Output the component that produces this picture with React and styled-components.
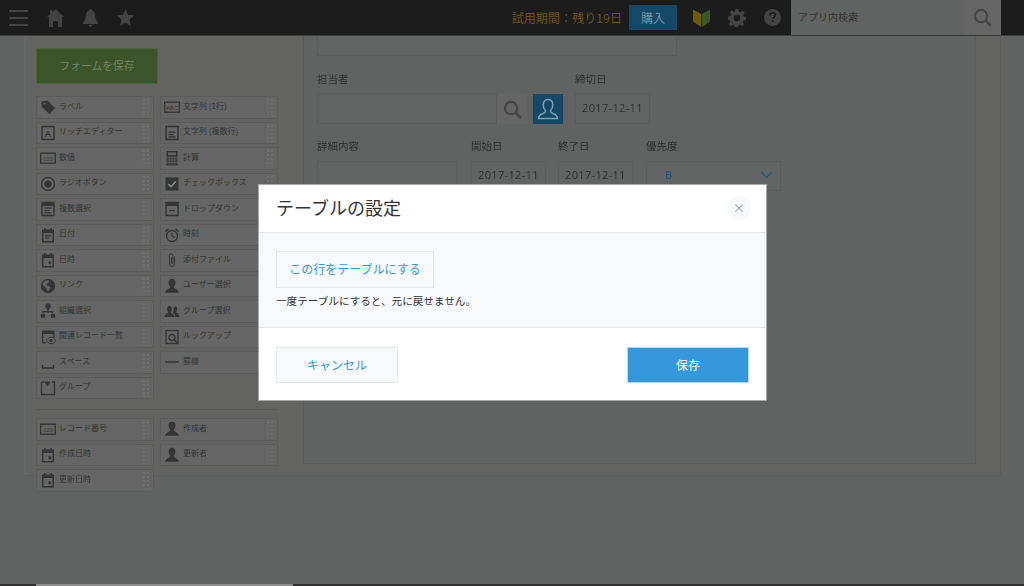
import React from "react"
import styled, { createGlobalStyle } from "styled-components"

const FONT = `"Noto Sans CJK JP", "Noto Sans", sans-serif`
const ICON = "#333534"
const TOP_ICON = "#434343"
const DIM_BLUE = "#154767"

const Global = createGlobalStyle`
    html, body { margin: 0; padding: 0; height: 100%; }
    body { background: #606361; font-family: ${FONT}; overflow: hidden; }
    * { box-sizing: border-box; }
`
const Page = styled.div`
    position: relative;
    width: 1024px;
    height: 586px;
    display: flex;
    flex-direction: column;
    overflow: hidden;
    filter: blur(0.35px);
`
const Header = styled.header`
    height: 36px;
    flex: none;
    background: #1c1c1c;
    border-bottom: 1px solid #3a3a3a;
    display: flex;
    align-items: center;
    padding-left: 9px;
    z-index: 1;
`
const Nav = styled.nav`
    display: flex;
    align-items: center;
    gap: 18px;
    margin-right: auto;
    svg:first-child { margin-right: 1px; }
`
const Trial = styled.span`
    font-size: 12px;
    letter-spacing: 0.1px;
    color: #6f540b;
    margin-right: 7px;
`
const Buy = styled.div`
    width: 48px;
    height: 25px;
    padding-bottom: 1px;
    background: ${DIM_BLUE};
    color: #7394aa;
    font-size: 12px;
    display: flex;
    align-items: center;
    justify-content: center;
    margin-right: 16px;
`
const Tools = styled.div`
    display: flex;
    align-items: center;
    gap: 18px;
    margin-right: 10px;
`
const Search = styled.div`
    width: 210px;
    height: 35px;
    margin-right: 23px;
    background: #616362;
    display: flex;
`
const SearchText = styled.div`
    flex: 1;
    padding-left: 7px;
    font-size: 10px;
    line-height: 33px;
    color: #333;
`
const SearchButton = styled.div`
    width: 37px;
    background: #646564;
    display: flex;
    align-items: center;
    justify-content: center;
`
const Main = styled.main`
    flex: 1;
    padding-left: 24px;
    min-height: 0;
`
const Panel = styled.div`
    width: 977px;
    height: 440px;
    background: #636362;
    border-left: 1px solid #666766;
    border-bottom: 1px solid #5c5d5c;
    border-right: 1px solid #5c5d5c;
    display: flex;
`
const Sidebar = styled.aside`
    width: 278px;
    flex: none;
    padding: 12px 0 0 11px;
`
const SaveForm = styled.div`
    width: 122px;
    height: 36px;
    padding-bottom: 2px;
    background: #3c5429;
    border: 1px solid #4a6437;
    color: #6d8465;
    font-size: 10.800px;
    display: flex;
    align-items: center;
    justify-content: center;
    margin-bottom: 12px;
`
const Palette = styled.div`
    width: 242px;
    display: grid;
    grid-template-columns: 118px 118px;
    grid-auto-rows: 22.5px;
    column-gap: 6px;
    row-gap: 3px;
`
const Divider = styled.hr`
    width: 242px;
    margin: 10px 0 8px;
    border: 0;
    border-top: 1px solid #585a59;
`
const ItemBox = styled.div`
    display: flex;
    align-items: center;
    padding: 0 3px 0 3px;
    background: #646564;
    border: 1px solid #5a5b5a;
    color: #343534;
    font-size: 8px;
    white-space: nowrap;
`
const IconSlot = styled.span`
    width: 16px;
    height: 16px;
    flex: none;
    margin-right: 3px;
    display: flex;
    align-items: center;
    justify-content: center;
`
const ItemLabel = styled.span`
    margin-top: -4px;
`
const Handle = styled.span`
    margin-left: auto;
    width: 8px;
    height: 18px;
    flex: none;
    background-image: radial-gradient(circle, #6e6f6e 0.7px, transparent 1px);
    background-size: 4px 4px;
`
const Canvas = styled.section`
    width: 673px;
    height: 428px;
    padding-left: 13px;
    background: #606361;
    border-left: 1px solid #5a5b5a;
    border-right: 1px solid #5a5b5a;
    border-bottom: 1px solid #5a5b5a;
`
const TopBox = styled.div`
    width: 360px;
    height: 20px;
    border: 1px solid #5a5c5b;
    border-top: 0;
    background: #626463;
    margin-bottom: 15px;
`
const FormRow = styled.div`
    display: flex;
    gap: 12px;
    margin-bottom: ${p => p.$mb || 0}px;
`
const Field = styled.div`
    width: ${p => p.$w}px;
    margin-left: ${p => p.$ml || 0}px;
    flex: none;
`
const Label = styled.div`
    font-size: 10.5px;
    line-height: 15px;
    height: 16px;
    color: #2f302f;
    margin-bottom: 7px;
`
const Input = styled.div`
    height: 30px;
    border: 1px solid #5a5c5b;
    background: #626463;
    color: #2f302f;
    font-family: "Open Sans", sans-serif;
    font-size: 11px;
    letter-spacing: 0.35px;
    line-height: 26px;
    padding-left: 6px;
`
const UserPicker = styled.div`
    display: flex;
    gap: 6px;
`
const UserInput = styled(Input)`
    width: 180px;
`
const PickerSearch = styled.div`
    width: 30px;
    height: 30px;
    background: #646564;
    display: flex;
    align-items: center;
    justify-content: center;
    margin-left: -6px;
`
const PickerUser = styled.div`
    width: 30px;
    height: 30px;
    background: ${DIM_BLUE};
    display: flex;
    align-items: center;
    justify-content: center;
`
const Select = styled(Input)`
    display: flex;
    align-items: center;
    justify-content: space-between;
    padding: 0 7px 2px 18px;
    color: #1d5075;
`
const Modal = styled.div`
    position: absolute;
    left: 258px;
    top: 184px;
    width: 509px;
    height: 217px;
    background: #fff;
    border: 1px solid #a9abaa;
    display: flex;
    flex-direction: column;
    z-index: 2;
`
const ModalHead = styled.div`
    height: 48px;
    flex: none;
    display: flex;
    align-items: center;
    justify-content: space-between;
    padding: 0 15px 2px 17px;
    border-bottom: 1px solid #e3e7e8;
`
const ModalTitle = styled.h2`
    margin: 0 0 2px;
    font-size: 18px;
    font-weight: 400;
    color: #333;
`
const Close = styled.div`
    width: 24px;
    height: 24px;
    border-radius: 50%;
    background: #f7f9fa;
    color: #9a9a9a;
    font-size: 12px;
    line-height: 23px;
    text-align: center;
`
const ModalBody = styled.div`
    height: 95px;
    flex: none;
    padding: 18px 17px 0;
    background: #f7f9fa;
    border-bottom: 1px solid #e3e7e8;
`
const OutlineButton = styled.div`
    width: ${p => p.$w}px;
    height: ${p => p.$h}px;
    padding-bottom: 2px;
    background: #f7f9fa;
    border: 1px solid #e3e7e8;
    color: #3498db;
    font-size: 12px;
    display: flex;
    align-items: center;
    justify-content: center;
`
const Note = styled.p`
    margin: 5px 0 0;
    font-size: 10.6px;
    line-height: 15px;
    color: #333;
`
const ModalFoot = styled.div`
    flex: 1;
    display: flex;
    align-items: flex-start;
    justify-content: space-between;
    padding: 19px 17px 0 17px;
`
const Save = styled.div`
    width: 122px;
    height: 36px;
    padding-bottom: 2px;
    background: #3498db;
    border: 1px solid #b5d8f0;
    color: #fff;
    font-size: 12px;
    display: flex;
    align-items: center;
    justify-content: center;
`
const ScrollTrack = styled.div`
    height: 2px;
    flex: none;
    background: #2f302f;
    padding-left: 36px;
`
const ScrollThumb = styled.div`
    width: 257px;
    height: 2px;
    background: #8c8d8c;
`

const I = ({ children, size = 16, box = 16 }) => (
    <svg width={size} height={size} viewBox={`0 0 ${box} ${box}`} fill={ICON}>{children}</svg>
)
const Person = (
    <path d="M8 .8c2.200 0 3.400 1.700 3.400 3.900 0 1.600-.7 3-1.500 3.800v1.300c0 .9 4.800 1.700 4.800 4.900H1.300c0-3.200 4.800-4 4.800-4.900V8.500c-.8-.8-1.500-2.200-1.500-3.800C4.600 2.500 5.800.8 8 .8z" />
)
const Calendar = ({ mark }) => (
    <>
        <path d="M4 1h1.600v2H4zM10.400 1H12v2h-1.600z" />
        <path fillRule="evenodd" d="M2 2.500h12v13H2zM3.500 6v8h9V6z" />
        {mark === "dot" ? <rect x="8.500" y="9.500" width="2.600" height="2.600" /> : <path d="M5 8h6v1.200H5zM5 10.500h4v1.200H5z" />}
    </>
)
const Framed = ({ text }) => (
    <>
        <rect x=".7" y="3.200" width="14.600" height="10" fill="none" stroke={ICON} strokeWidth="1.300" />
        <text x="8" y="10.500" fontSize="5.500" textAnchor="middle" fontFamily="Liberation Sans" fill={ICON}>{text}</text>
    </>
)
const Lines = ({ top }) => (
    <>
        <rect x="2" y="1.500" width="12" height="13" fill="none" stroke={ICON} strokeWidth="1.500" />
        {top && <rect x="2" y="2" width="12" height="3" />}
        <path d="M4.500 6.500h7v1.200h-7zM4.500 9h5v1.200h-5zM4.500 11.300h7v1.200h-7z" />
    </>
)

const icons = {
    tag: <I><path d="M1.500 2.500 7.500 1.500l7.500 7.500-5.500 6L1.800 8z" /><circle cx="4.500" cy="4.500" r="1" fill="#646564" /></I>,
    abc: <I><Framed text="ABC" /></I>,
    rich: (
        <I>
            <rect x="2" y="1.500" width="12" height="13" fill="none" stroke={ICON} strokeWidth="1.500" />
            <text x="8" y="11.500" fontSize="9.500" fontWeight="700" textAnchor="middle" fontFamily="Liberation Sans" fill={ICON}>A</text>
        </I>
    ),
    para: <I><Lines /></I>,
    num: <I><Framed text="123" /></I>,
    calc: (
        <I>
            <path fillRule="evenodd" d="M2.500 1h11v14.500h-11zM4 2.500v2.500h8V2.500z" />
            <path stroke="#646564" strokeWidth=".7" d="M2.500 7.500h11M2.500 10h11M2.500 12.500h11M5.200 6v9.500M8 6v9.500M10.800 6v9.500" />
        </I>
    ),
    radio: (
        <I>
            <circle cx="8" cy="8" r="6.500" fill="none" stroke={ICON} strokeWidth="1.400" />
            <circle cx="8" cy="8" r="3.500" />
        </I>
    ),
    check: (
        <I>
            <rect x="1.500" y="1.500" width="13" height="13" rx="1" />
            <path d="m4.300 8 2.700 2.700 4.700-5.200" fill="none" stroke="#8a8b8a" strokeWidth="1.600" />
        </I>
    ),
    multi: <I><Lines top /></I>,
    drop: (
        <I>
            <rect x="2" y="1.500" width="12" height="13" fill="none" stroke={ICON} strokeWidth="1.500" />
            <rect x="2" y="2" width="12" height="3" />
            <path d="M5 9h6v1.200H5z" />
        </I>
    ),
    date: <I><Calendar /></I>,
    clock: (
        <I>
            <circle cx="8" cy="9" r="5.500" fill="none" stroke={ICON} strokeWidth="1.400" />
            <path d="M8 5.800V9l2.400 1.500" fill="none" stroke={ICON} strokeWidth="1.200" />
            <path d="m1 4 3-2.800 1 1L2 5zM15 4l-3-2.800-1 1L14 5z" />
        </I>
    ),
    datetime: <I><Calendar mark="dot" /></I>,
    clip: (
        <I>
            <path d="M10.500 4.500v7.500a2.500 2.500 0 0 1-5 0V3.500a1.700 1.700 0 0 1 3.400 0V11a.7.7 0 0 1-1.400 0V5" fill="none" stroke={ICON} strokeWidth="1" />
        </I>
    ),
    globe: (
        <I>
            <path fillRule="evenodd" d="M8 .8a7.200 7.200 0 1 1 0 14.400A7.200 7.200 0 0 1 8 .8zM2.500 7c1 1.200 3 1.400 3.500 3 .3 1 1.500 1.500 1.500 3 1 .3 2-1.800 3-3 .5-.8-1.500-1.800-3-2-1-.2-1.200-1.800-.2-2.500 1-.6 2-1 1.700-3C5.500 1.800 3 4 2.500 7z" />
        </I>
    ),
    user: <I>{Person}</I>,
    org: (
        <I>
            <circle cx="8" cy="3.200" r="2.700" />
            <path d="M7.300 5h1.400v3h4.500v2h-1.400V9.300H8.700V10H7.300v-.7H3.800V10H2.400V8h4.900z" />
            <circle cx="3" cy="12.700" r="2.300" /><circle cx="13" cy="12.700" r="2.300" />
        </I>
    ),
    group: (
        <I>
            <path d="M5.500 3c1.500 0 2.400 1.300 2.400 2.900 0 1.100-.5 2.100-1 2.700v1c0 .7 3.500 1.300 3.500 4.400H.6c0-3.100 3.500-3.700 3.500-4.400v-1c-.5-.6-1-1.600-1-2.700C3.100 4.300 4 3 5.500 3z" />
            <path d="M11 3c1.300 0 2.200 1.200 2.200 2.700 0 1-.4 1.900-.9 2.500v1c0 .6 3.100 1.200 3.100 4.800h-4.200c0-2.500-1.700-3.700-2.300-4.500.3-.4.5-1 .5-1.500.4-.6.200-1.600 0-2.300.2-1.300 1-1.700 1.600-1.700z" />
        </I>
    ),
    related: (
        <I>
            <path fillRule="evenodd" d="M2 1.500h12.500V9h-1.300V5H3.300v8H6v1.500H2z" />
            <path d="M11 8.200c2 0 3.700 1.500 4.500 3.300-.8 1.800-2.500 3.300-4.500 3.300S7.300 13.300 6.500 11.500c.8-1.800 2.500-3.300 4.500-3.300z" fill="none" stroke={ICON} strokeWidth="1" />
            <circle cx="11" cy="11.500" r="1.500" />
        </I>
    ),
    lookup: (
        <I>
            <rect x="2" y="1.500" width="12" height="13" fill="none" stroke={ICON} strokeWidth="1.300" />
            <circle cx="8" cy="8.500" r="3" fill="none" stroke={ICON} strokeWidth="1.300" />
            <path d="m10 10.500 4 4" stroke={ICON} strokeWidth="1.600" />
        </I>
    ),
    space: <I><path d="M2.500 11v3h11v-3" fill="none" stroke={ICON} strokeWidth="1.300" /></I>,
    rule: <I><rect x="1" y="7.300" width="14" height="1.400" /></I>,
    folder: (
        <I>
            <path d="M2 2h2M12 2h2.500v12.500h-13V2" fill="none" stroke={ICON} strokeWidth="1.300" />
            <path d="M4 1.500h6.500L7.300 6.500z" />
        </I>
    ),
}

const TOP_ITEMS = [
    ["tag", "ラベル"], ["abc", "文字列 (1行)"],
    ["rich", "リッチエディター"], ["para", "文字列 (複数行)"],
    ["num", "数値"], ["calc", "計算"],
    ["radio", "ラジオボタン"], ["check", "チェックボックス"],
    ["multi", "複数選択"], ["drop", "ドロップダウン"],
    ["date", "日付"], ["clock", "時刻"],
    ["datetime", "日時"], ["clip", "添付ファイル"],
    ["globe", "リンク"], ["user", "ユーザー選択"],
    ["org", "組織選択"], ["group", "グループ選択"],
    ["related", "関連レコード一覧"], ["lookup", "ルックアップ"],
    ["space", "スペース"], ["rule", "罫線"],
    ["folder", "グループ"],
]
const SYSTEM_ITEMS = [
    ["num", "レコード番号"], ["user", "作成者"],
    ["datetime", "作成日時"], ["user", "更新者"],
    ["datetime", "更新日時"],
]

const Item = ({ icon, label }) => (
    <ItemBox>
        <IconSlot>{icons[icon]}</IconSlot>
        <ItemLabel>{label}</ItemLabel>
        <Handle />
    </ItemBox>
)

const Magnifier = ({ size, color }) => (
    <svg width={size} height={size} viewBox="0 0 20 20" fill="none" stroke={color} strokeWidth="2.200">
        <circle cx="8.500" cy="8.500" r="6.500" />
        <path d="m13.500 13.500 5.500 5.500" strokeWidth="2.800" />
    </svg>
)

const App = () => (
    <Page>
        <Global />
        <Header>
            <Nav>
                <svg width="19" height="18" viewBox="0 0 19 18" fill={TOP_ICON}>
                    <path d="M0 1h19v2H0zM0 8h19v2H0zM0 15h19v2H0z" />
                </svg>
                <svg width="17" height="18" viewBox="0 0 17 18" fill={TOP_ICON}>
                    <path d="M8.500 0 17 8h-2v10h-4v-6H6v6H2V8H0l3-2.800V1h2.500v1.900z" />
                </svg>
                <svg width="17" height="18" viewBox="0 0 17 18" fill={TOP_ICON}>
                    <path d="M8.500 0c1 0 1.600.7 1.700 1.800 2.300.7 3 2.700 3 5 0 3 1 5 2.800 6.700v1.500H1v-1.500C2.800 11.800 3.800 9.800 3.800 6.800c0-2.300.7-4.300 3-5C6.900.7 7.500 0 8.500 0zM6.500 15.800h4a2 2 0 0 1-4 0z" />
                </svg>
                <svg width="17" height="17" viewBox="0 0 17 17" fill={TOP_ICON}>
                    <path d="m8.500 0 2.500 5.800 6 .6-4.500 4.100L13.800 17 8.500 13.600 3.200 17l1.300-6.500L0 6.400l6-.6z" />
                </svg>
            </Nav>
            <Trial>試用期間：残り19日</Trial>
            <Buy>購入</Buy>
            <Tools>
                <svg width="17" height="19" viewBox="0 0 17 19">
                    <path d="M0 1.500 8 6v13L1.500 14.500C.5 13.800 0 13 0 12z" fill="#6f5c00" />
                    <path d="M17 1.500 9 6v13l6.500-4.500c1-.7 1.500-1.500 1.500-2.500z" fill="#365a20" />
                </svg>
                <svg width="18" height="18" viewBox="0 0 18 18" fill={TOP_ICON}>
                    <path fillRule="evenodd" d="M7.500 0h3l.4 2.600 1.600.7L14.700 1.800l2 2-1.500 2.200.7 1.600 2.100.4v3l-2.600.4-.7 1.600 1.500 2.200-2 2-2.200-1.500-1.600.7-.4 2.600h-3l-.4-2.600-1.600-.7-2.200 1.500-2-2 1.500-2.200-.7-1.600L0 10.500v-3l2.600-.4.700-1.600L1.800 3.300l2-2 2.200 1.500 1.100-.5zM9 5.800a3.200 3.200 0 1 0 0 6.400 3.200 3.200 0 0 0 0-6.400z" />
                </svg>
                <svg width="17" height="17" viewBox="0 0 17 17">
                    <circle cx="8.500" cy="8.500" r="8.500" fill={TOP_ICON} />
                    <path d="M5.800 6.300c.1-1.600 1.200-2.400 2.800-2.400 1.500 0 2.700.8 2.700 2.200 0 2-2.200 1.900-2.200 3.900" fill="none" stroke="#1c1c1c" strokeWidth="1.600" />
                    <rect x="8" y="11.300" width="1.500" height="1.700" fill="#1c1c1c" />
                </svg>
            </Tools>
            <Search>
                <SearchText>アプリ内検索</SearchText>
                <SearchButton><Magnifier size={19} color="#454645" /></SearchButton>
            </Search>
        </Header>
        <Main>
            <Panel>
                <Sidebar>
                    <SaveForm>フォームを保存</SaveForm>
                    <Palette>
                        {TOP_ITEMS.map(([icon, label]) => <Item key={label} icon={icon} label={label} />)}
                    </Palette>
                    <Divider />
                    <Palette>
                        {SYSTEM_ITEMS.map(([icon, label]) => <Item key={label} icon={icon} label={label} />)}
                    </Palette>
                </Sidebar>
                <Canvas>
                    <TopBox />
                    <FormRow $mb={14}>
                        <Field $w={246}>
                            <Label>担当者</Label>
                            <UserPicker>
                                <UserInput />
                                <PickerSearch><Magnifier size={19} color="#454645" /></PickerSearch>
                                <PickerUser>
                                    <svg width="24" height="24" viewBox="0 0 24 24" fill="none" stroke="#7d9eb4" strokeWidth="1.500">
                                        <path d="M12 2.500c3.100 0 4.800 2.400 4.800 5.400 0 2.200-1 4.200-2.100 5.300v1.700c0 1.400 6.800 1.800 6.800 6.600h-19c0-4.800 6.800-5.200 6.800-6.600v-1.700c-1.100-1.100-2.100-3.100-2.100-5.300 0-3 1.700-5.400 4.800-5.400z" />
                                    </svg>
                                </PickerUser>
                            </UserPicker>
                        </Field>
                        <Field $w={75}>
                            <Label>締切日</Label>
                            <Input>2017-12-11</Input>
                        </Field>
                    </FormRow>
                    <FormRow>
                        <Field $w={140}>
                            <Label>詳細内容</Label>
                            <Input />
                        </Field>
                        <Field $w={75} $ml={2}>
                            <Label>開始日</Label>
                            <Input>2017-12-11</Input>
                        </Field>
                        <Field $w={75}>
                            <Label>終了日</Label>
                            <Input>2017-12-11</Input>
                        </Field>
                        <Field $w={135} $ml={1}>
                            <Label>優先度</Label>
                            <Select>
                                B
                                <svg width="13" height="8" viewBox="0 0 13 8" fill="none" stroke="#24597f" strokeWidth="1.200">
                                    <path d="m1 1 5.500 5.500L12 1" />
                                </svg>
                            </Select>
                        </Field>
                    </FormRow>
                </Canvas>
            </Panel>
        </Main>
        <ScrollTrack><ScrollThumb /></ScrollTrack>
        <Modal>
            <ModalHead>
                <ModalTitle>テーブルの設定</ModalTitle>
                <Close>×</Close>
            </ModalHead>
            <ModalBody>
                <OutlineButton $w={158} $h={37}>この行をテーブルにする</OutlineButton>
                <Note>一度テーブルにすると、元に戻せません。</Note>
            </ModalBody>
            <ModalFoot>
                <OutlineButton $w={122} $h={36}>キャンセル</OutlineButton>
                <Save>保存</Save>
            </ModalFoot>
        </Modal>
    </Page>
)

export default App
